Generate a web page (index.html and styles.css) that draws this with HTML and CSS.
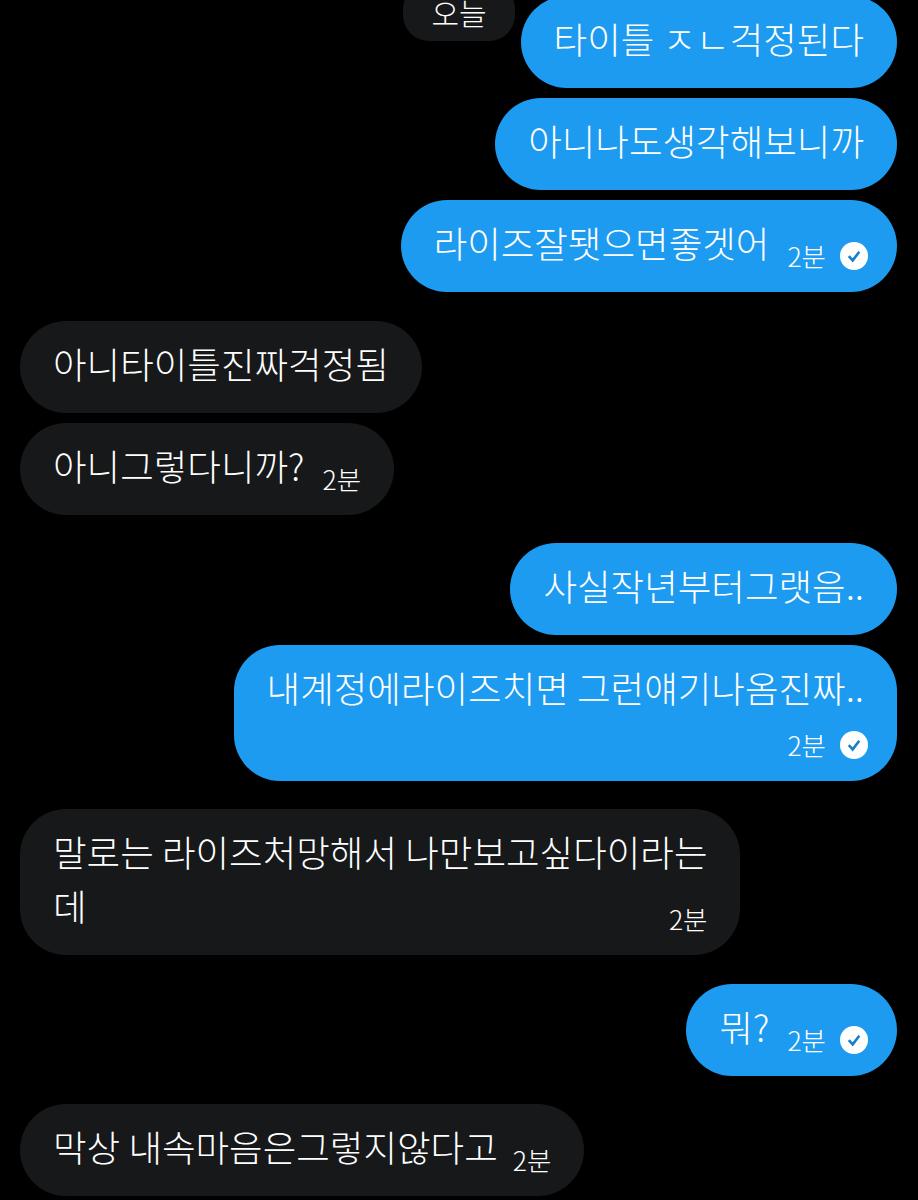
FILE: index.html
```html
<!DOCTYPE html>
<html lang="ko">
<head>
    <meta charset="UTF-8">
    <meta name="viewport" content="width=device-width, initial-scale=1.0">
    <title>Messages</title>
    <link rel="stylesheet" href="styles.css">
</head>
<body>

    <div class="date-pill">오늘</div>

    <div class="thread">
        <div class="group sent">
            <div class="bubble"><span class="text">타이틀 ㅈㄴ걱정된다</span></div>
            <div class="bubble"><span class="text">아니나도생각해보니까</span></div>
            <div class="bubble with-check">
                <span class="text">라이즈잘됏으면좋겟어</span>
                <span class="meta">2분
                    <svg class="check" viewBox="0 0 28 28"><circle cx="14" cy="14" r="14" fill="#fff"/><path d="M8.8 14.2l3.9 4.2 6.6-8.6" fill="none" stroke="#1a7fc6" stroke-width="2.6"/></svg>
                </span>
            </div>
        </div>

        <div class="group received">
            <div class="bubble"><span class="text">아니타이틀진짜걱정됨</span></div>
            <div class="bubble">
                <span class="text">아니그렇다니까?</span>
                <span class="meta">2분</span>
            </div>
        </div>

        <div class="group sent">
            <div class="bubble"><span class="text">사실작년부터그랫음..</span></div>
            <div class="bubble stacked">
                <span class="text">내계정에라이즈치면 그런얘기나옴진짜..</span>
                <span class="meta meta-row">2분
                    <svg class="check" viewBox="0 0 28 28"><circle cx="14" cy="14" r="14" fill="#fff"/><path d="M8.8 14.2l3.9 4.2 6.6-8.6" fill="none" stroke="#1a7fc6" stroke-width="2.6"/></svg>
                </span>
            </div>
        </div>

        <div class="group received">
            <div class="bubble stacked">
                <span class="text">말로는 라이즈처망해서 나만보고싶다이라는</span>
                <div class="last-line">
                    <span class="text">데</span>
                    <span class="meta">2분</span>
                </div>
            </div>
        </div>

        <div class="group sent">
            <div class="bubble with-check">
                <span class="text">뭐?</span>
                <span class="meta">2분
                    <svg class="check" viewBox="0 0 28 28"><circle cx="14" cy="14" r="14" fill="#fff"/><path d="M8.8 14.2l3.9 4.2 6.6-8.6" fill="none" stroke="#1a7fc6" stroke-width="2.6"/></svg>
                </span>
            </div>
        </div>

        <div class="group received">
            <div class="bubble">
                <span class="text">막상 내속마음은그렇지않다고</span>
                <span class="meta meta-tight">2분</span>
            </div>
        </div>
    </div>

</body>
</html>
```

FILE: styles.css
```css
html, body {
    height: 100%;
}

body {
    margin: 0;
    background: #000;
    color: #fff;
    font-family: "Noto Sans CJK KR", "Noto Sans", sans-serif;
    font-weight: 300;
    overflow: hidden;
    position: relative;
}

/* Thread is scrolled a little, so the first bubble is cut off */
.thread {
    display: flex;
    flex-direction: column;
    gap: 28.4px;
    margin-top: -3.8px;
    padding: 0 21px 0 20px;
}

.group {
    display: flex;
    flex-direction: column;
    gap: 10px;
}

.group.sent {
    align-items: flex-end;
}

.group.received {
    align-items: flex-start;
}

.bubble {
    display: flex;
    padding: 16px 33px 22px;
    border-radius: 46px;
    font-size: 36.5px;
    line-height: 54px;
    word-spacing: -2px;
}

.sent .bubble {
    background: #1d9bf0;
}

.received .bubble {
    background: #17181a;
}

.bubble.with-check {
    padding-right: 29px;
}

.bubble.stacked {
    flex-direction: column;
}

.text {
    white-space: nowrap;
}

.meta {
    display: flex;
    align-items: center;
    gap: 14px;
    align-self: flex-end;
    height: 26px;
    margin: 0 0 1px 18px;
    font-size: 26.5px;
    line-height: 26px;
}

.meta-row {
    margin: 17px -4px 1px 0;
}

.meta-tight {
    margin-left: 15px;
}

.last-line {
    display: flex;
    justify-content: space-between;
}

.check {
    width: 28px;
    height: 28px;
}

/* Date label lies over the thread */
.date-pill {
    position: absolute;
    top: -17px;
    left: 403px;
    width: 112px;
    height: 58px;
    border-radius: 26px;
    background: #17181a;
    font-size: 30px;
    line-height: 58px;
    text-align: center;
}
```
